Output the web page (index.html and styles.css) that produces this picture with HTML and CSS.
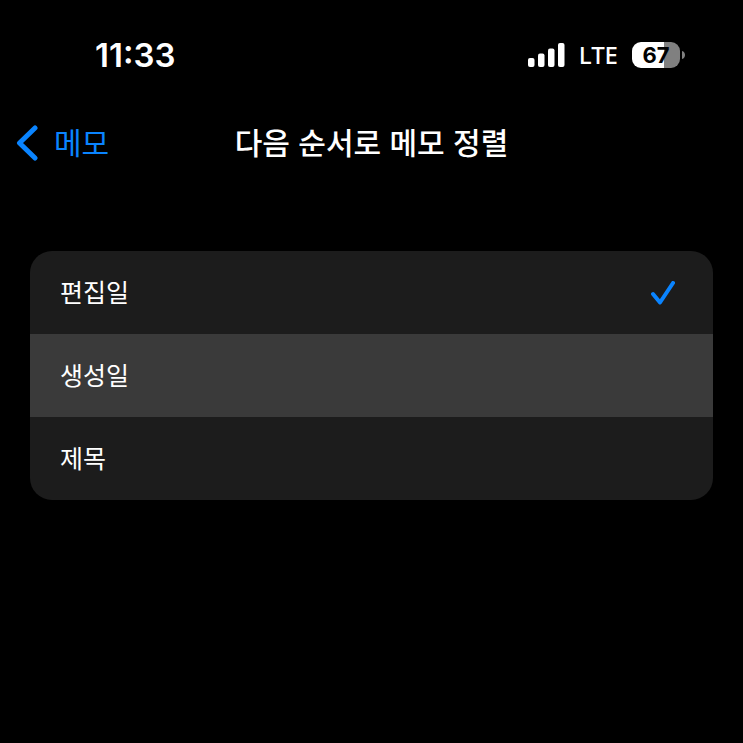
FILE: index.html
```
<!DOCTYPE html>
<html lang="ko">
<head>
    <meta charset="UTF-8">
    <meta name="viewport" content="width=device-width, initial-scale=1.0">
    <title>다음 순서로 메모 정렬</title>
    <link rel="stylesheet" href="styles.css">
</head>
<body>
    <header class="status-bar">
        <time class="clock">11:33</time>
        <div class="status-icons">
            <svg class="signal" width="37" height="24" viewBox="0 0 37 24" fill="#fff" aria-hidden="true">
                <rect x="0" y="15" width="6.5" height="9" rx="2"/>
                <rect x="10" y="10.5" width="6.5" height="13.5" rx="2"/>
                <rect x="20" y="5.5" width="6.5" height="18.5" rx="2"/>
                <rect x="30" y="0" width="6.5" height="24" rx="2"/>
            </svg>
            <span class="network">LTE</span>
            <div class="battery">
                <span class="battery-level">67</span>
                <svg class="battery-cap" width="3" height="8" viewBox="0 0 3 8" aria-hidden="true">
                    <path d="M0 0C4 1 4 7 0 8Z" fill="#808080"/>
                </svg>
            </div>
        </div>
    </header>

    <nav class="nav-bar">
        <a class="back" href="#">
            <svg width="22" height="36" viewBox="0 0 22 36" fill="none" stroke="#0a84ff" stroke-width="5" stroke-linecap="round" stroke-linejoin="round" aria-hidden="true">
                <path d="M19 3L3.5 18L19 33"/>
            </svg>
            <span class="back-text">메모</span>
        </a>
        <h1 class="title">다음 순서로 메모 정렬</h1>
    </nav>

    <main>
        <form class="option-list">
            <label class="option">
                <input type="radio" name="sort" value="edited" checked>
                <span class="option-text">편집일</span>
                <svg class="check" width="24" height="24" viewBox="0 0 24 24" aria-hidden="true">
                    <path d="M2 13L9 21.5L22 2"/>
                </svg>
            </label>
            <label class="option pressed">
                <input type="radio" name="sort" value="created">
                <span class="option-text">생성일</span>
                <svg class="check" width="24" height="24" viewBox="0 0 24 24" aria-hidden="true">
                    <path d="M2 13L9 21.5L22 2"/>
                </svg>
            </label>
            <label class="option">
                <input type="radio" name="sort" value="title">
                <span class="option-text">제목</span>
                <svg class="check" width="24" height="24" viewBox="0 0 24 24" aria-hidden="true">
                    <path d="M2 13L9 21.5L22 2"/>
                </svg>
            </label>
        </form>
    </main>
</body>
</html>
```
FILE: styles.css
```
* {
    box-sizing: border-box;
    margin: 0;
    padding: 0;
}

body {
    min-height: 100vh;
    background-color: #000;
    color: #fff;
    font-family: 'Noto Sans CJK KR', sans-serif;
}

.status-bar {
    display: flex;
    justify-content: space-between;
    align-items: center;
    height: 110px;
    padding: 0 58px 0 95px;
    font-family: 'Inter', sans-serif;
}

.clock {
    font-size: 33px;
    font-weight: 600;
}

.status-icons {
    display: flex;
    align-items: center;
}

.network {
    margin-left: 14px;
    font-family: 'Noto Sans', sans-serif;
    font-size: 24px;
    font-weight: 500;
    line-height: 32px;
}

.battery {
    display: flex;
    align-items: center;
    gap: 2px;
    margin-left: 14px;
}

.battery-level {
    width: 48px;
    border-radius: 9px;
    background: linear-gradient(to right, #fff 67%, #808080 67%);
    color: #000;
    font-size: 22px;
    font-weight: 700;
    line-height: 26px;
    text-align: center;
}

.nav-bar {
    display: grid;
    grid-template-columns: 1fr auto 1fr;
    align-items: center;
    height: 66px;
    padding: 0 16px;
    font-size: 30px;
    line-height: 44px;
}

.back {
    display: flex;
    align-items: center;
    gap: 16px;
    color: #0a84ff;
    text-decoration: none;
}

.back-text,
.title,
.option-text {
    padding-bottom: 4px;
}

.title {
    font-size: 30px;
    font-weight: 500;
}

main {
    padding: 75px 30px 0;
}

.option-list {
    overflow: hidden;
    border-radius: 22px;
    background-color: #1c1c1c;
}

.option {
    display: flex;
    justify-content: space-between;
    align-items: center;
    position: relative;
    height: 83px;
    padding: 0 38px 0 30px;
    font-size: 25px;
    cursor: pointer;
}

.option.pressed,
.option:active {
    background-color: #3a3a3a;
}

.option input {
    position: absolute;
    opacity: 0;
}

.check {
    visibility: hidden;
    fill: none;
    stroke: #0a84ff;
    stroke-width: 4;
    stroke-linecap: round;
    stroke-linejoin: round;
}

.option input:checked ~ .check {
    visibility: visible;
}
```
